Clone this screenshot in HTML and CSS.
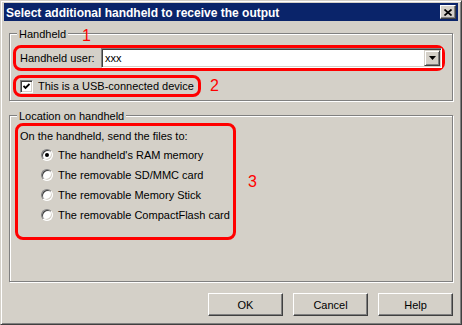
FILE: index.html
```html
<!DOCTYPE html>
<html lang="en">
<head>
    <meta charset="UTF-8">
    <title>Select additional handheld</title>
    <link rel="stylesheet" href="styles.css">
</head>
<body>
<div class="window">
    <div class="titlebar">
        <span class="title">Select additional handheld to receive the output</span>
        <span class="close">
            <svg width="8" height="7" viewBox="0 0 8 7"><path d="M0.5 0.5 L7.5 6.5 M7.5 0.5 L0.5 6.5" stroke="#000" stroke-width="1.7" fill="none"/></svg>
        </span>
    </div>
    <div class="content">
        <div class="group group-handheld">
            <span class="legend">Handheld</span>
            <span class="mark mark-one">1</span>
            <div class="note note-user">
                <span class="field-label">Handheld user:</span>
                <div class="combo">
                    <span class="combo-value">xxx</span>
                    <span class="combo-btn">
                        <svg width="7" height="4" viewBox="0 0 7 4"><polygon points="0,0 7,0 3.5,4" fill="#000"/></svg>
                    </span>
                </div>
            </div>
            <div class="note-row usb-row">
                <div class="note note-usb">
                    <span class="checkbox">
                        <svg width="7" height="7" viewBox="0 0 7 7"><path d="M0.5 3 L2.5 5 L6.5 1" stroke="#000" stroke-width="1.8" fill="none"/></svg>
                    </span>
                    <span>This is a USB-connected device</span>
                </div>
                <span class="mark mark-two">2</span>
            </div>
        </div>
        <div class="group group-location">
            <span class="legend">Location on handheld</span>
            <div class="note-row">
                <div class="note note-location">
                    <div class="intro">On the handheld, send the files to:</div>
                    <ul class="options">
                        <li><span class="radio selected"></span>The handheld's RAM memory</li>
                        <li><span class="radio"></span>The removable SD/MMC card</li>
                        <li><span class="radio"></span>The removable Memory Stick</li>
                        <li><span class="radio"></span>The removable CompactFlash card</li>
                    </ul>
                </div>
                <span class="mark mark-three">3</span>
            </div>
        </div>
        <div class="buttons">
            <button type="button">OK</button>
            <button type="button">Cancel</button>
            <button type="button">Help</button>
        </div>
    </div>
</div>
</body>
</html>
```

FILE: styles.css
```css
body{
    margin: 0;
    background-color: #d4d0c8;
    font: 11px "Liberation Sans", Arial, sans-serif;
    color: #000;
}
.window{
    box-sizing: border-box;
    width: 462px;
    height: 325px;
    display: flex;
    flex-direction: column;
    padding: 2px 3px;
    background-color: #d4d0c8;
    border: 1px solid;
    border-color: #d4d0c8 #404040 #404040 #d4d0c8;
    box-shadow: inset 1px 1px #fff, inset -1px -1px #808080;
}
.titlebar{
    height: 18px;
    display: flex;
    align-items: center;
    padding: 0 2px;
    background-color: #0a246a;
    color: #fff;
}
.title{
    flex: 1;
    font-weight: bold;
    font-size: 12px;
    line-height: 18px;
    padding-top: 1px;
}
.close{
    box-sizing: border-box;
    width: 16px;
    height: 14px;
    display: flex;
    align-items: center;
    justify-content: center;
    background-color: #d4d0c8;
    border: 1px solid;
    border-color: #fff #404040 #404040 #fff;
    box-shadow: inset -1px -1px #808080;
}
.content{
    flex: 1;
    display: flex;
    flex-direction: column;
    padding: 0 5px;
}
.group{
    position: relative;
    box-sizing: border-box;
    border: 1px solid #808080;
    box-shadow: 1px 1px #fff, inset 1px 1px #fff;
}
.legend{
    position: absolute;
    top: -6px;
    left: 7px;
    padding: 0 2px;
    line-height: 13px;
    background-color: #d4d0c8;
}
.group-handheld{
    margin-top: 12px;
    height: 68px;
    padding: 11px 7px 0 3px;
}
.group-location{
    margin-top: 14px;
    height: 167px;
    padding: 7px 0 0 5px;
}
.note{
    border: 3px solid #f00;
    border-radius: 8px;
}
.note-row{
    display: flex;
    align-items: center;
}
.mark{
    color: #f00;
    font-size: 16px;
    line-height: 16px;
}
.mark-one{
    position: absolute;
    top: -6px;
    left: 72px;
}
.mark-two{
    margin-left: 9px;
}
.mark-three{
    margin-left: 12px;
}
.note-user{
    box-sizing: border-box;
    height: 26px;
    display: flex;
    align-items: center;
    padding: 0 0 0 4px;
}
.field-label{
    flex: none;
    width: 81px;
}
.combo{
    flex: 1;
    box-sizing: border-box;
    height: 20px;
    display: flex;
    align-items: center;
    padding: 1px;
    background-color: #fff;
    border: 1px solid;
    border-color: #808080 #fff #fff #808080;
    box-shadow: inset 1px 1px #404040, inset -1px -1px #d4d0c8;
}
.combo-value{
    flex: 1;
    padding-left: 2px;
}
.combo-btn{
    box-sizing: border-box;
    width: 16px;
    height: 16px;
    display: flex;
    align-items: center;
    justify-content: center;
    background-color: #d4d0c8;
    border: 1px solid;
    border-color: #d4d0c8 #404040 #404040 #d4d0c8;
    box-shadow: inset 1px 1px #fff, inset -1px -1px #808080;
}
.usb-row{
    margin-top: 4px;
}
.note-usb{
    box-sizing: border-box;
    height: 22px;
    display: flex;
    align-items: center;
    gap: 5px;
    padding: 0 4px;
}
.checkbox{
    box-sizing: border-box;
    width: 13px;
    height: 13px;
    display: flex;
    align-items: center;
    justify-content: center;
    background-color: #fff;
    border: 1px solid;
    border-color: #808080 #fff #fff #808080;
    box-shadow: inset 1px 1px #404040, inset -1px -1px #d4d0c8;
}
.note-location{
    box-sizing: border-box;
    width: 221px;
    padding: 4px 0 12px 2px;
}
.intro{
    line-height: 13px;
}
.options{
    list-style: none;
    margin: 2px 0 0 21px;
    padding: 0;
}
.options li{
    height: 20px;
    display: flex;
    align-items: center;
    gap: 5px;
}
.radio{
    box-sizing: border-box;
    width: 12px;
    height: 12px;
    display: flex;
    align-items: center;
    justify-content: center;
    border-radius: 50%;
    background-color: #fff;
    border: 1px solid;
    border-color: #808080 #fff #fff #808080;
    box-shadow: inset 1px 1px #404040, inset -1px -1px #d4d0c8;
}
.radio.selected::after{
    content: "";
    width: 4px;
    height: 4px;
    border-radius: 50%;
    background-color: #000;
}
.buttons{
    display: flex;
    justify-content: flex-end;
    gap: 10px;
    margin-top: 11px;
}
.buttons button{
    width: 75px;
    height: 23px;
    padding: 0;
    font: inherit;
    color: #000;
    background-color: #d4d0c8;
    border: 1px solid;
    border-color: #fff #404040 #404040 #fff;
    box-shadow: inset -1px -1px #808080;
}
```
